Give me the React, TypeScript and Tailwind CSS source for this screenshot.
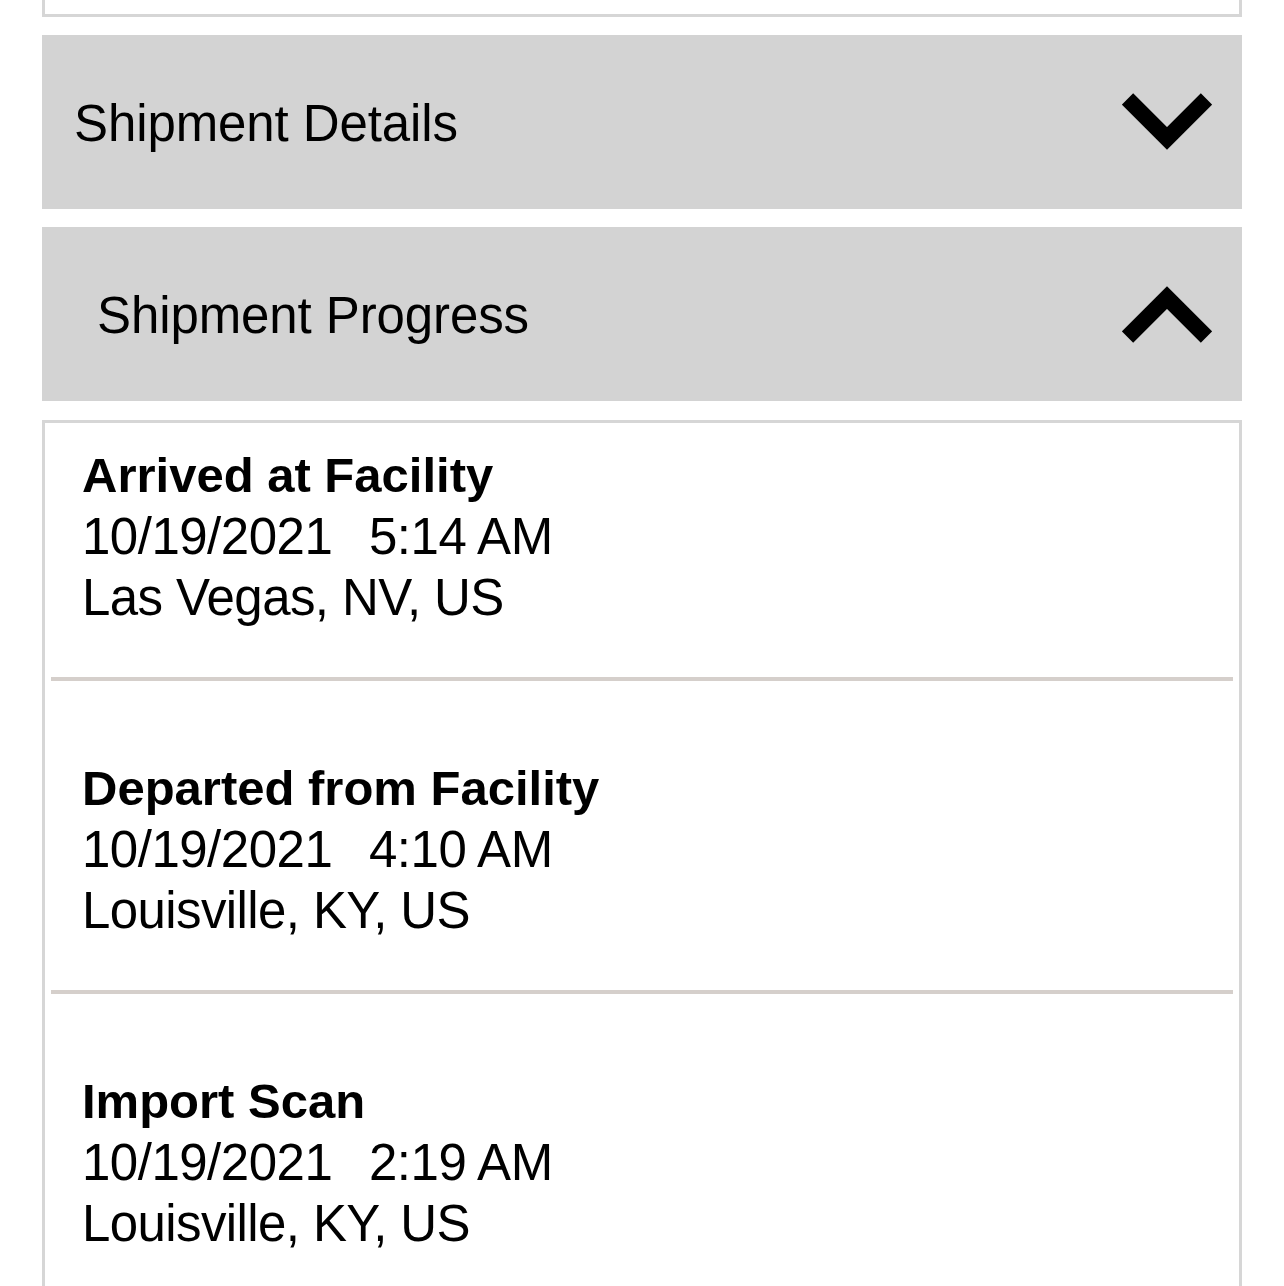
import React from 'react';

type Scan = {
  id: number;
  status: string;
  date: string;
  time: string;
  place: string;
};

const scans: Scan[] = [
  { id: 1, status: 'Arrived at Facility', date: '10/19/2021', time: '5:14 AM', place: 'Las Vegas, NV, US' },
  { id: 2, status: 'Departed from Facility', date: '10/19/2021', time: '4:10 AM', place: 'Louisville, KY, US' },
  { id: 3, status: 'Import Scan', date: '10/19/2021', time: '2:19 AM', place: 'Louisville, KY, US' },
];

const Chevron: React.FC<{ up?: boolean }> = ({ up }) => (
  <svg width="90" height="58" viewBox="0 0 90 58" className="shrink-0">
    <path
      d={up ? 'M5.5 52 L45 12.5 L84.5 52' : 'M5.5 6 L45 45.5 L84.5 6'}
      fill="none"
      stroke="#000"
      strokeWidth="16"
      strokeLinecap="butt"
      strokeLinejoin="miter"
    />
  </svg>
);

const SectionHeader: React.FC<{ title: string; open?: boolean; indent: string }> = ({ title, open, indent }) => (
  <div className={`flex h-[174px] items-center justify-between bg-[#d3d3d3] pr-[30px] ${indent}`}>
    <span className="pt-[4px] text-[51px] tracking-[-0.1px] text-black">{title}</span>
    <Chevron up={open} />
  </div>
);

const App: React.FC = () => {
  return (
    <div
      className="h-[1286px] overflow-hidden bg-white px-[42px]"
      style={{ fontFamily: '"Liberation Sans", Arial, sans-serif' }}
    >
      {/* tail of the card above */}
      <div className="h-[17px] border-x-[3px] border-b-[3px] border-[#d6d6d6] bg-white" />

      <div className="mt-[18px]">
        <SectionHeader title="Shipment Details" indent="pl-[32px]" />
      </div>

      <div className="mt-[18px]">
        <SectionHeader title="Shipment Progress" open indent="pl-[55px]" />
      </div>

      <div className="mt-[19px] border-x-[3px] border-t-[3px] border-[#d6d6d6] bg-white">
        {scans.map((scan, i) => (
          <div key={scan.id}>
            <div className={`pl-[37px] pb-[49px] text-[51px] leading-[61px] text-black ${i === 0 ? 'pt-[22px]' : 'pt-[77px]'}`}>
              <p className="text-[49px] font-semibold">{scan.status}</p>
              <p className="tracking-[-0.5px]">
                <span className="inline-block w-[287px]">{scan.date}</span>
                {scan.time}
              </p>
              <p className="tracking-[-0.6px]">{scan.place}</p>
            </div>
            <div className="mx-[6px] h-[4px] bg-[#d5cfcb]" />
          </div>
        ))}
      </div>
    </div>
  );
};

export default App;
